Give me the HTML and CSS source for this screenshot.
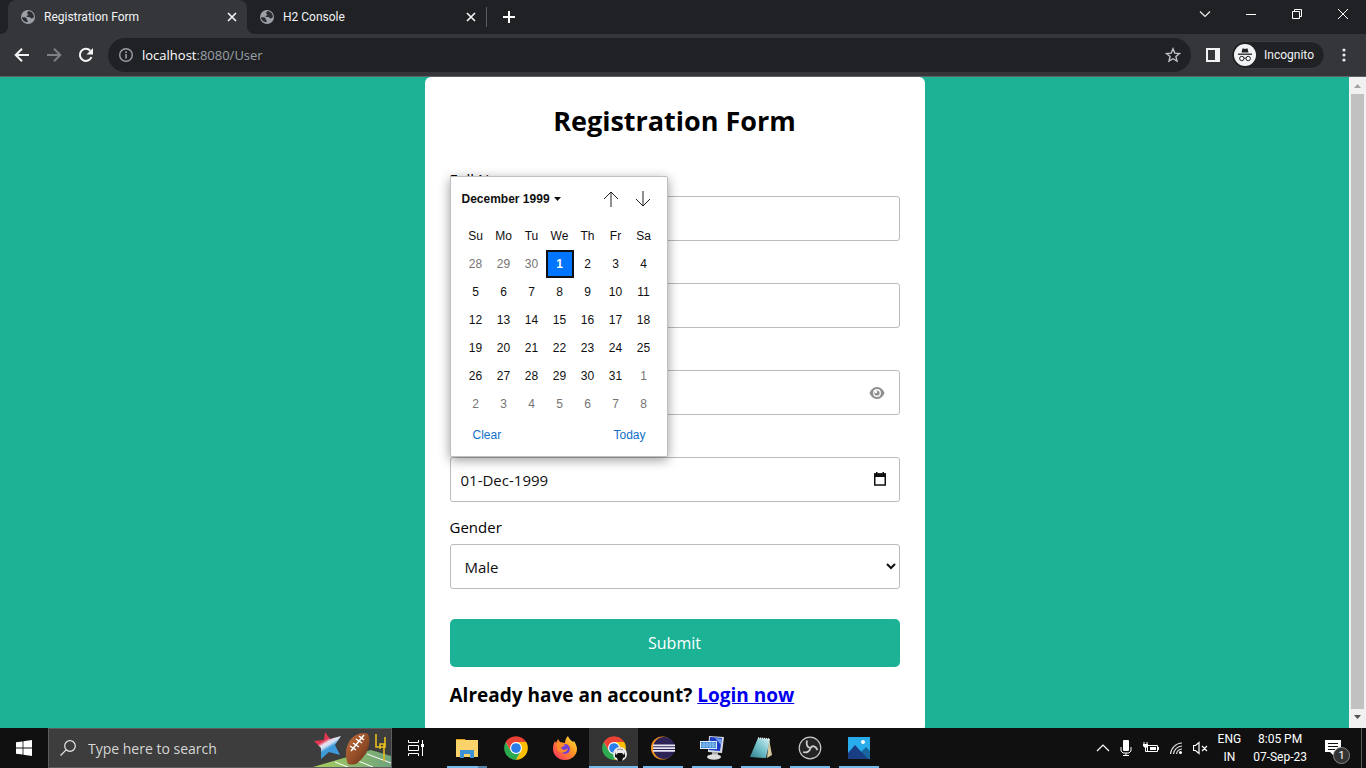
FILE: index.html
```html
<!DOCTYPE html>
<html lang="en">
<head>
<meta charset="utf-8">
<title>Registration Form</title>
<link rel="stylesheet" href="styles.css">
</head>
<body>
<svg class="sprite" aria-hidden="true">
  <symbol id="globe" viewBox="0 0 16 16">
    <circle cx="8" cy="8" r="7" fill="#9aa0a6"/>
    <path d="M2 8.300c1.800-.2 3.600-.1 4.500.9.600.8-.1 1.300.7 1.900.7.500.6 1.300.3 2.200-3-.2-5.300-2.300-5.500-5zM8.500 2c-.3 1-1.400 1.100-1.500 2-.1 1.200 1.300.6 1.400 1.700.1.900-1.900.6-2 1.600 0 .8 1.500.5 2.600.6 1.500.1 1.500 1.500 2.700 1.600 1 .1 1.300-.8 2.200-1.200C14 5 11.800 2.300 8.500 2z" fill="#2b2c30"/>
  </symbol>
  <symbol id="cross" viewBox="0 0 10 10"><path d="M1 1l8 8M9 1l-8 8" fill="none" stroke="currentColor" stroke-width="1.700"/></symbol>
  <symbol id="chrome" viewBox="0 0 48 48">
    <circle cx="24" cy="24" r="20" fill="#fff"/>
    <path d="M5 13A22 22 0 0 0 24 46L33.500 29.500A11 11 0 0 1 14.500 29.500z" fill="#2da94f"/>
    <path d="M24 46A22 22 0 0 0 43 13H24A11 11 0 0 1 33.500 29.500z" fill="#fdbd00"/>
    <path d="M43 13A22 22 0 0 0 5 13L14.500 29.500A11 11 0 0 1 24 13z" fill="#ea4335"/>
    <circle cx="24" cy="24" r="9" fill="#2b7de9"/>
  </symbol>
</svg>

<header class="browser">
  <div class="tabs">
    <div class="tab active">
      <svg class="i16"><use href="#globe"/></svg><span class="tab-title">Registration Form</span>
      <button class="tab-close" aria-label="Close tab"><svg class="i10"><use href="#cross"/></svg></button>
    </div>
    <div class="tab">
      <svg class="i16"><use href="#globe"/></svg><span class="tab-title">H2 Console</span>
      <button class="tab-close" aria-label="Close tab"><svg class="i10"><use href="#cross"/></svg></button>
    </div>
    <button class="new-tab" aria-label="New tab"><svg width="12" height="12" viewBox="0 0 12 12"><path d="M6 0v12M0 6h12" stroke="#fff" stroke-width="2"/></svg></button>
    <div class="window-buttons">
      <button aria-label="Search tabs"><svg width="12" height="12" viewBox="0 0 12 12"><path d="M1 3.500l5 5 5-5" fill="none" stroke="#eee" stroke-width="1.200"/></svg></button>
      <button aria-label="Minimize"><svg width="12" height="12" viewBox="0 0 12 12"><path d="M1 6.500h10" stroke="#fff"/></svg></button>
      <button aria-label="Restore"><svg width="12" height="12" viewBox="0 0 12 12"><path d="M1.500 3.500h7v7h-7zM3.500 3.500v-2h7v7h-2" fill="none" stroke="#fff"/></svg></button>
      <button aria-label="Close"><svg width="12" height="12" viewBox="0 0 12 12"><path d="M1 1l10 10M11 1l-10 10" stroke="#fff"/></svg></button>
    </div>
  </div>
  <div class="toolbar">
    <button class="nav" aria-label="Back"><svg class="i16" viewBox="0 0 16 16"><path d="M15 8H2M8 1.700L1.700 8 8 14.300" fill="none" stroke="#f1f3f4" stroke-width="2"/></svg></button>
    <button class="nav" aria-label="Forward"><svg class="i16" viewBox="0 0 16 16"><path d="M1 8h13M8 1.700L14.300 8 8 14.300" fill="none" stroke="#7e8084" stroke-width="2"/></svg></button>
    <button class="nav" aria-label="Reload"><svg class="i16" viewBox="0 0 16 16"><path d="M13.500 10A6 6 0 1 1 12.300 3.800" fill="none" stroke="#f1f3f4" stroke-width="2"/><path d="M15 1v6.500H8.500z" fill="#f1f3f4"/></svg></button>
    <div class="omnibox">
      <svg class="i16" viewBox="0 0 16 16"><circle cx="8" cy="8" r="6.300" fill="none" stroke="#9aa0a6" stroke-width="1.400"/><path d="M8 7v4.500M8 4.300v1.600" stroke="#9aa0a6" stroke-width="1.600"/></svg>
      <span class="url"><b>localhost</b>:8080/User</span>
      <button class="star" aria-label="Bookmark"><svg class="i16" viewBox="0 0 16 16"><path d="M8 1.800l1.800 4.300 4.700.4-3.600 3 1.100 4.600L8 11.700l-4 2.400 1.100-4.600-3.600-3 4.700-.4z" fill="none" stroke="#bdc1c6" stroke-width="1.400"/></svg></button>
    </div>
    <button class="panel" aria-label="Side panel"><svg width="14" height="14" viewBox="0 0 14 14"><path d="M1 1h12v12H1z" fill="none" stroke="#f1f3f4" stroke-width="2"/><path d="M9 1h5v12H9z" fill="#f1f3f4"/></svg></button>
    <button class="incognito"><svg width="22" height="22" viewBox="0 0 22 22"><circle cx="11" cy="11" r="11" fill="#f1f3f4"/><path d="M7.500 8.500L8.500 4.500h1l1.500.5 1.500-.5h1l1 4z" fill="#202124"/><path d="M4 10.200h14" stroke="#202124" stroke-width="1.300"/><circle cx="7.800" cy="14.500" r="2.200" fill="none" stroke="#202124"/><circle cx="14.200" cy="14.500" r="2.200" fill="none" stroke="#202124"/><path d="M10 14.200h2" stroke="#202124"/></svg>Incognito</button>
    <button class="menu" aria-label="Menu"><svg width="4" height="14" viewBox="0 0 4 14"><g fill="#e8eaed"><circle cx="2" cy="2" r="1.600"/><circle cx="2" cy="7" r="1.600"/><circle cx="2" cy="12" r="1.600"/></g></svg></button>
  </div>
</header>

<div class="viewport">
  <main class="page">
    <form class="card">
      <h1>Registration Form</h1>
      <div class="field"><label for="name">Full Name</label><input id="name" type="text"></div>
      <div class="field unlabelled"><input type="email" aria-label="Email"></div>
      <div class="field unlabelled">
        <div class="control"><input type="password" aria-label="Password">
          <button type="button" class="adorn eye" aria-label="Show password"><svg width="16" height="14" viewBox="0 0 16 14"><path d="M8 1C4 1 1.500 4.500.5 7c1 2.500 3.500 6 7.500 6s6.500-3.500 7.500-6C14.500 4.500 12 1 8 1z" fill="#8f8f8f"/><circle cx="8" cy="7" r="3.900" fill="#fff"/><circle cx="8" cy="7" r="2.600" fill="#8f8f8f"/><circle cx="7" cy="6" r="1.200" fill="#fff"/></svg></button></div>
      </div>
      <div class="field unlabelled">
        <div class="control"><input type="text" value="01-Dec-1999" aria-label="Birth date">
          <button type="button" class="adorn" aria-label="Open calendar"><svg width="14" height="14" viewBox="0 0 14 14"><path d="M1.750 2h10.500v11H1.750z" fill="none" stroke="#111" stroke-width="1.500"/><path d="M1 1.500h12V5H1zM3 0h1.500v2H3zM9.500 0H11v2H9.500z" fill="#111"/></svg></button>
          <div class="calendar">
            <div class="cal-head">
              <button type="button" class="month">December 1999<svg width="7" height="4" viewBox="0 0 7 4"><path d="M0 0h7L3.500 4z" fill="#111"/></svg></button>
              <button type="button" class="step" aria-label="Previous month"><svg class="i16" viewBox="0 0 16 16"><path d="M8 16V1M1 8l7-7 7 7" fill="none" stroke="#222"/></svg></button>
              <button type="button" class="step" aria-label="Next month"><svg class="i16" viewBox="0 0 16 16"><path d="M8 0v15M1 8l7 7 7-7" fill="none" stroke="#222"/></svg></button>
            </div>
            <table>
              <thead><tr><th>Su</th><th>Mo</th><th>Tu</th><th>We</th><th>Th</th><th>Fr</th><th>Sa</th></tr></thead>
              <tbody>
                <tr><td class="out">28</td><td class="out">29</td><td class="out">30</td><td class="picked">1</td><td>2</td><td>3</td><td>4</td></tr>
                <tr><td>5</td><td>6</td><td>7</td><td>8</td><td>9</td><td>10</td><td>11</td></tr>
                <tr><td>12</td><td>13</td><td>14</td><td>15</td><td>16</td><td>17</td><td>18</td></tr>
                <tr><td>19</td><td>20</td><td>21</td><td>22</td><td>23</td><td>24</td><td>25</td></tr>
                <tr><td>26</td><td>27</td><td>28</td><td>29</td><td>30</td><td>31</td><td class="out">1</td></tr>
                <tr><td class="out">2</td><td class="out">3</td><td class="out">4</td><td class="out">5</td><td class="out">6</td><td class="out">7</td><td class="out">8</td></tr>
              </tbody>
            </table>
            <div class="cal-foot"><button type="button">Clear</button><button type="button">Today</button></div>
          </div>
        </div>
      </div>
      <div class="field"><label for="gender">Gender</label><select id="gender"><option>Male</option></select></div>
      <button class="submit" type="submit">Submit</button>
      <p class="login">Already have an account? <a href="#login">Login now</a></p>
    </form>
  </main>
  <div class="scrollbar" aria-hidden="true">
    <svg width="17" height="17" viewBox="0 0 17 17"><path d="M5 11l3.500-4 3.500 4z" fill="#a3a3a3"/></svg>
    <div class="thumb"></div>
    <svg width="17" height="17" viewBox="0 0 17 17"><path d="M5 6l3.500 4L12 6z" fill="#505050"/></svg>
  </div>
</div>

<footer class="taskbar">
  <button class="start" aria-label="Start"><svg class="i16" viewBox="0 0 16 16"><path d="M0 2.300L6.600 1.400v6.200H0zM7.400 1.300L16 0v7.600H7.400zM0 8.400h6.600v6.200L0 13.700zM7.400 8.400H16V16l-8.600-1.300z" fill="#fff"/></svg></button>
  <div class="search">
    <svg class="i16" viewBox="0 0 16 16"><circle cx="10" cy="6" r="5.300" fill="none" stroke="#e8e8e8" stroke-width="1.200"/><path d="M6.200 9.800L.5 15.500" stroke="#e8e8e8" stroke-width="1.200"/></svg>
    <input type="text" placeholder="Type here to search" aria-label="Search">
    <svg class="doodle" width="78" height="38" viewBox="0 0 78 38">
      <defs><linearGradient id="star" x1="0" y1="0" x2=".6" y2="1"><stop offset=".4" stop-color="#e2364f"/><stop offset=".5" stop-color="#eadfed"/><stop offset=".58" stop-color="#cfe0f4"/><stop offset=".68" stop-color="#3e9ad8"/></linearGradient>
      <linearGradient id="ball" x1="0" y1="0" x2="1" y2="1"><stop offset="0" stop-color="#c4713d"/><stop offset=".6" stop-color="#8f4a26"/><stop offset="1" stop-color="#5d2a14"/></linearGradient>
      <linearGradient id="field"><stop offset="0" stop-color="#a8cf5c"/><stop offset="1" stop-color="#6fa37c"/></linearGradient></defs>
      <path d="M0 38L58 21l20 6v11z" fill="url(#field)"/>
      <path d="M22 33l13 5M38 29l22 9M54 25l24 9" stroke="#fff"/>
      <path d="M12 3l5 7 11-3-6 9 5 10-11-3-8 7v-11L1 12l10-1z" fill="url(#star)"/>
      <path d="M35 35c-4-9-2-20 4-26 5-5 12-6 16-4 3 6 1 16-4 22-5 7-9 10-16 8z" fill="url(#ball)"/>
      <path d="M38 22L51 6M37 17l6 4M40 14l6 4M43 10l6 4M46 7l5 4" stroke="#fff" stroke-width="1.500"/>
      <path d="M63 5v13h9V8M67 20v-5h4v17" fill="none" stroke="#e8bd1d" stroke-width="1.600"/>
    </svg>
  </div>
  <button class="taskview" aria-label="Task view"><svg class="i16" viewBox="0 0 16 16"><path d="M.5 0v2.500h10V0M.5 16v-2.500h10V16M.5 5.500h10v5H.5zM14.500 0v16" fill="none" stroke="#fff"/><path d="M13 4h3v3h-3z" fill="#fff"/></svg></button>
  <nav class="apps">
    <button class="open grouped" aria-label="File Explorer"><svg class="i24" viewBox="0 0 24 24"><path d="M1 3h9l1 2h-10z" fill="#e09f17"/><path d="M1 4h22v17H1z" fill="#fbd36a"/><path d="M5 14h14v8h-4v-4H9v4H5z" fill="#3b93d5"/></svg></button>
    <button aria-label="Chrome"><svg class="i26"><use href="#chrome"/></svg></button>
    <button aria-label="Firefox"><svg class="i24" viewBox="0 0 24 24"><defs><linearGradient id="fx" x1="1" y1="0" x2="0" y2="1"><stop offset="0" stop-color="#fff04a"/><stop offset=".4" stop-color="#ff9a22"/><stop offset="1" stop-color="#ff2567"/></linearGradient></defs><path d="M15 0c1 3 3 4 5 6l1-1c2 3 3 6 3 8 0 6-5 11-12 11S0 19 0 13c0-4 1-6 2-8l1 2 2-4 2 3 5 1c0-3 1-5 3-7z" fill="url(#fx)"/><circle cx="12" cy="13" r="5" fill="#7140d6"/><path d="M4 7c3-1 5 0 8 2-1 2-3 1-4 3 2 3 5 2 7 0-1 6-9 6-11 1z" fill="#ff8a28"/></svg></button>
    <button class="open current" aria-label="Chrome Incognito"><svg class="i26"><use href="#chrome"/></svg><svg class="avatar" width="14" height="14" viewBox="0 0 14 14"><circle cx="7" cy="7" r="7" fill="#e9e9e9"/><path d="M2 5l1 3 2-2h4l2 2 1-3v5l-2 1-1 3H5l-1-3-2-1z" fill="#111"/><path d="M4 3l3-1 3 1" fill="none" stroke="#888"/></svg></button>
    <button class="open" aria-label="Eclipse"><svg class="i24" viewBox="0 0 24 24"><circle cx="11.500" cy="12" r="11.500" fill="#f7941e"/><circle cx="13" cy="12" r="11" fill="#2c2255"/><path d="M2 8.500h22v1.800H2zM2 11.200h22V13H2zM2 13.900h22v1.800H2z" fill="#e8e5f2"/></svg></button>
    <button class="open" aria-label="Remote desktop"><svg class="i24" viewBox="0 0 24 24"><path d="M9 0l15 1-2 16-14-1z" fill="#d6dae2"/><path d="M10 1l12 1-2 13-11-1z" fill="#1a39c5"/><path d="M15 2l7 1-1 6z" fill="#709cf1"/><path d="M0 5h17v8H0z" fill="#e1edf8"/><path d="M1 6h15v6H1z" fill="#3684d4"/><path d="M1 8h15M1 10h15M4 6v6M7 6v6M10 6v6M13 6v6" stroke="#a9d2f4" stroke-width=".7"/><path d="M12 16h6v4h-6z" fill="#aaa"/><ellipse cx="14" cy="21" rx="7" ry="2.700" fill="#ddd"/></svg></button>
    <button class="open" aria-label="Notepad"><svg class="i24" viewBox="0 0 24 24"><defs><linearGradient id="np" x1="1" y1="0" x2="0" y2="1"><stop offset="0" stop-color="#d9f2f4"/><stop offset=".5" stop-color="#70bfc9"/><stop offset="1" stop-color="#2e7d8a"/></linearGradient></defs><path d="M20 3l3 16-5 3z" fill="#d8c99b"/><path d="M9 2l12 1-4 19-16-1z" fill="url(#np)"/><path d="M9 2l12 1" stroke="#eee" stroke-width="1.500" stroke-dasharray="1 1"/></svg></button>
    <button class="open" aria-label="OBS Studio"><svg class="i24" viewBox="0 0 24 24"><circle cx="12" cy="12" r="10.800" fill="#242424" stroke="#c8c8c8" stroke-width="1.200"/><path d="M9 4.500c-1 4 0 7 3.500 7.500M12.500 12c2-3 5-2 7 2M12.500 12c-1 4-4 5-7.500 4" fill="none" stroke="#ccc" stroke-width="1.800"/></svg></button>
    <button class="open" aria-label="Photos"><svg class="i24" viewBox="0 0 24 24"><path d="M1 1h22v22H1z" fill="#29aceb"/><path d="M12 18l7-7 4 4v8H10z" fill="#17669f"/><path d="M1 17l7-8 13 14H1z" fill="#193e86"/><circle cx="16" cy="6" r="2" fill="#fff"/></svg></button>
  </nav>
  <div class="tray">
    <svg width="14" height="16" viewBox="0 0 14 16"><path d="M1 11l6-6 6 6" fill="none" stroke="#fff" stroke-width="1.200"/></svg>
    <svg width="12" height="16" viewBox="0 0 12 16"><rect x="3" y="0" width="6" height="11" rx="1" fill="#fff"/><path d="M1 7v4l2 2h6l2-2V7M6 13v3M3 15.500h6" fill="none" stroke="#fff"/></svg>
    <svg width="17" height="16" viewBox="0 0 17 16"><path d="M5.500 5.500h10v6h-10zM16.500 7v3" fill="none" stroke="#fff"/><path d="M8 7h6v3H8zM1 4h5v2L4 8H3L1 6z" fill="#fff"/><path d="M2 2v2M5 2v2M3.500 8v3.500H6" fill="none" stroke="#fff"/></svg>
    <svg width="14" height="16" viewBox="0 0 14 16"><path d="M1.500 14A12 12 0 0 1 13 3M4.500 14A9 9 0 0 1 13 6M7.500 14A6 6 0 0 1 13 9" fill="none" stroke="#ddd" stroke-width="1.200"/><circle cx="11.500" cy="12.500" r="1.500" fill="#fff"/></svg>
    <svg width="15" height="16" viewBox="0 0 15 16"><path d="M.5 5.500h2l3.500-3v11l-3.500-3h-2zM9 6l5 5M14 6l-5 5" fill="none" stroke="#fff" stroke-width="1.200"/></svg>
    <div class="lang">ENG<br>IN</div>
    <div class="clock">8:05 PM<br>07-Sep-23</div>
    <button class="notices" aria-label="Notifications"><svg class="i16" viewBox="0 0 16 16"><path d="M0 0h16v12H9v4l-4-4H0z" fill="#fff"/><path d="M3 3.500h10M3 6.500h10M3 9.500h7" stroke="#101010"/></svg><span class="count">1</span></button>
  </div>
</footer>
</body>
</html>
```
FILE: styles.css
```css
* { box-sizing: border-box; }

body {
  margin: 0;
  height: 100vh;
  display: flex;
  flex-direction: column;
  overflow: hidden;
  font-family: "Open Sans", sans-serif;
}

button {
  display: flex;
  align-items: center;
  justify-content: center;
  margin: 0;
  padding: 0;
  border: 0;
  background: none;
  color: inherit;
  font: inherit;
}

svg { display: block; flex: none; }
.sprite { position: absolute; width: 0; height: 0; }
.i10 { width: 10px; height: 10px; }
.i16 { width: 16px; height: 16px; }
.i24 { width: 24px; height: 24px; }
.i26 { width: 26px; height: 26px; }

/* Browser chrome */
.browser {
  flex: none;
  color: #f1f3f4;
  background: #202124;
  font-family: Roboto, sans-serif;
  font-size: 12px;
}

.tabs { display: flex; height: 34px; padding-left: 8px; }

.tab {
  position: relative;
  display: flex;
  align-items: center;
  gap: 8px;
  width: 239px;
  padding: 0 9px 0 12px;
}

.tab.active { background: #35363a; border-radius: 8px 8px 0 0; }

.tab.active::before,
.tab.active::after {
  content: "";
  position: absolute;
  bottom: 0;
  width: 8px;
  height: 8px;
}

.tab.active::before { right: 100%; background: radial-gradient(circle at 0 0, #202124 8px, #35363a 8px); }
.tab.active::after { left: 100%; background: radial-gradient(circle at 100% 0, #202124 8px, #35363a 8px); }
.tab-title { flex: 1; }
.tab-close { width: 12px; height: 16px; }

.new-tab {
  align-self: center;
  width: 44px;
  height: 20px;
  border-left: 1px solid #5b5c60;
}

.window-buttons { display: flex; margin-left: auto; padding-bottom: 6px; }
.window-buttons button { width: 46px; }

.toolbar {
  display: flex;
  align-items: center;
  height: 43px;
  padding: 0 20px 0 14px;
  background: #35363a;
  border-bottom: 1px solid #606166;
}

.nav { width: 16px; margin-right: 16px; }

.omnibox {
  display: flex;
  flex: 1;
  align-items: center;
  gap: 8px;
  height: 34px;
  margin-right: 15px;
  margin-left: -2px;
  padding: 0 10px;
  border-radius: 17px;
  background: #202124;
  color: #9aa0a6;
  font: 13px "Open Sans", sans-serif;
}

.url { flex: 1; }
.url b { color: #fff; font-weight: 400; }

.incognito {
  gap: 8px;
  height: 28px;
  margin: 0 17px 0 11px;
  padding: 0 10px 0 2px;
  border: 1px solid #3c3d41;
  border-radius: 14px;
  background: #202124;
}

.menu { width: 4px; }

/* Web page */
.viewport { display: flex; flex: 1; min-height: 0; }

.page {
  flex: 1;
  overflow: hidden;
  background: #1cb296;
}

.card {
  max-width: 500px;
  margin: 0 auto;
  padding: 25px;
  border-radius: 6px;
  background: #fff;
}

.card h1 {
  margin: 0 0 27px;
  font-size: 27px;
  font-weight: 700;
  line-height: 38px;
  text-align: center;
}

.field { margin-bottom: 13px; font-size: 15px; }
.field.unlabelled { padding-top: 29px; }
.field label { display: block; margin-bottom: 5px; line-height: 24px; }

.field input,
.field select {
  display: block;
  width: 100%;
  height: 45px;
  padding: 0 10px;
  border: 1px solid #bbb;
  border-radius: 3px;
  background: #fff;
  color: #111;
  font: inherit;
}

.control { position: relative; }

.adorn {
  position: absolute;
  top: 0;
  right: 13px;
  height: 44px;
}

.adorn.eye { right: 15px; height: 45px; }

.submit {
  width: 100%;
  height: 48px;
  margin-top: 30px;
  border-radius: 5px;
  background: #1cb296;
  color: #fff;
  font-size: 16px;
  font-weight: 500;
}

.login {
  margin: 16px 0 0;
  font-size: 19px;
  font-weight: 700;
  line-height: 24px;
}

.login a { color: #00e; }

/* Date picker */
.calendar {
  position: absolute;
  z-index: 1;
  bottom: 100%;
  left: 0;
  width: 218px;
  padding: 6px 8px 4px 11px;
  border: 1px solid #bfbfbf;
  border-radius: 2px;
  background: #fff;
  box-shadow: 0 3px 12px rgba(0, 0, 0, 0.4);
  color: #101010;
  font-family: "Liberation Sans", Arial, sans-serif;
  font-size: 12px;
}

.cal-head { display: flex; height: 32px; }
.month { gap: 4px; margin-right: auto; font-weight: 700; }
.step { width: 32px; }

.calendar table { border-spacing: 0; margin-top: 6px; }

.calendar th,
.calendar td {
  width: 28px;
  height: 28px;
  padding: 0;
  font-weight: 400;
  text-align: center;
}

.calendar th { height: 29px; }
.calendar .out { color: #757575; }

.calendar .picked {
  border: 2px solid #101010;
  background: #0075ff;
  color: #fff;
  font-weight: 700;
}

.cal-foot {
  display: flex;
  justify-content: space-between;
  height: 34px;
  padding: 0 13px 0 11px;
  color: #1070ca;
}

/* Scrollbar */
.scrollbar {
  display: flex;
  flex-direction: column;
  align-items: center;
  width: 17px;
  padding-bottom: 2px;
  background: #f1f1f1;
}

.thumb { flex: 1; width: 13px; background: #c1c1c1; }

/* Taskbar */
.taskbar {
  display: flex;
  flex: none;
  height: 40px;
  background: #101010;
  color: #fff;
  font-size: 12px;
}

.start { width: 48px; }

.search {
  display: flex;
  align-items: center;
  gap: 12px;
  width: 344px;
  padding-left: 11px;
  border: 1px solid #5c5c5c;
  background: #3d3d3d;
}

.search input {
  flex: 1;
  min-width: 0;
  padding: 0;
  border: 0;
  background: none;
  color: #fff;
  font: 14px "Open Sans", sans-serif;
}

.search input::placeholder { color: #d6d6d6; }
.taskview { width: 48px; margin-right: 2px; }
.apps { display: flex; }
.apps button { position: relative; width: 49px; }

.apps .open::after {
  content: "";
  position: absolute;
  right: 4px;
  bottom: 0;
  left: 5px;
  height: 2px;
  background: #76b9ed;
}

.apps .grouped::after { background: linear-gradient(90deg, #76b9ed 31px, #5284ab 31px); }
.apps .current { background: #333; }
.apps .current::after { right: 0; left: 0; }
.avatar { position: absolute; right: 11px; bottom: 7px; }

.tray {
  display: flex;
  align-items: center;
  gap: 10px;
  margin-left: auto;
  font-family: Roboto, sans-serif;
}

.lang, .clock { line-height: 18px; text-align: center; }
.clock { margin-left: 2px; }

.notices {
  position: relative;
  width: 37px;
  height: 100%;
  margin-right: 4px;
  margin-left: 8px;
  padding-right: 20px;
  border-right: 1px solid #5c5c5c;
}

.count {
  position: absolute;
  right: 11px;
  bottom: 4px;
  width: 17px;
  height: 17px;
  border: 1px solid #888;
  border-radius: 50%;
  background: #333;
  font-size: 11px;
  line-height: 15px;
  text-align: center;
}
```
